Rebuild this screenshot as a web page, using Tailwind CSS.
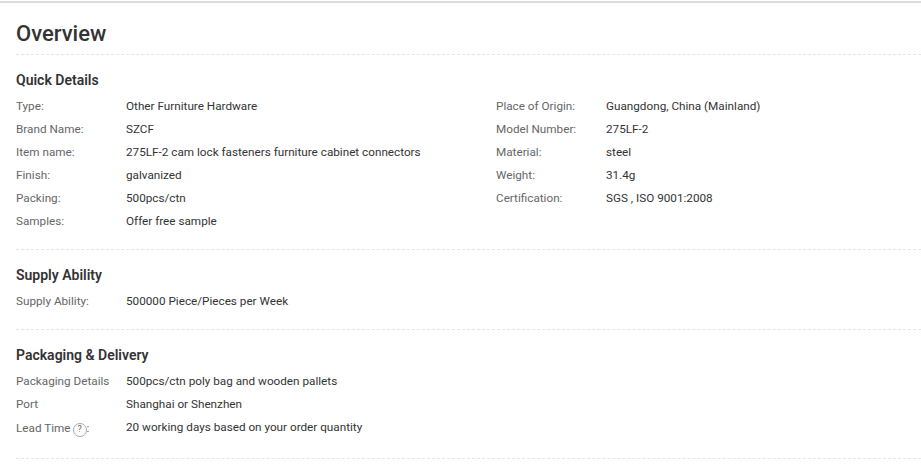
<!DOCTYPE html>
<html lang="en">
<head>
    <meta charset="UTF-8">
    <title>Overview</title>
    <script src="https://cdn.jsdelivr.net/npm/@tailwindcss/browser@4"></script>
</head>
<body class="bg-white font-['Roboto',sans-serif] text-[11.72px] leading-[23px] text-[#333] overflow-hidden">
    <div class="mt-px h-[2px] bg-[#ddd]"></div>

    <div class="pl-4">
        <!-- Title -->
        <div class="h-[52px] border-b border-dashed border-[#e5e5e5]">
            <h1 class="pt-[16px] text-[22px] leading-[30px] font-medium text-[#333]">Overview</h1>
        </div>

        <!-- Quick Details -->
        <div class="h-[195px] border-b border-dashed border-[#e5e5e5]">
            <h2 class="pt-[15px] pb-[5px] text-[14px] leading-[20px] font-semibold">Quick Details</h2>
            <div class="grid grid-cols-[110px_370px_110px_1fr]">
                <div class="text-[#666]">Type:</div><div>Other Furniture Hardware</div>
                <div class="text-[#666]">Place of Origin:</div><div>Guangdong, China (Mainland)</div>
                <div class="text-[#666]">Brand Name:</div><div>SZCF</div>
                <div class="text-[#666]">Model Number:</div><div>275LF-2</div>
                <div class="text-[#666]">Item name:</div><div>275LF-2 cam lock fasteners furniture cabinet connectors</div>
                <div class="text-[#666]">Material:</div><div>steel</div>
                <div class="text-[#666]">Finish:</div><div>galvanized</div>
                <div class="text-[#666]">Weight:</div><div>31.4g</div>
                <div class="text-[#666]">Packing:</div><div>500pcs/ctn</div>
                <div class="text-[#666]">Certification:</div><div>SGS , ISO 9001:2008</div>
                <div class="text-[#666]">Samples:</div><div>Offer free sample</div>
            </div>
        </div>

        <!-- Supply Ability -->
        <div class="h-[80px] border-b border-dashed border-[#e5e5e5]">
            <h2 class="pt-[15px] pb-[5px] text-[14px] leading-[20px] font-semibold">Supply Ability</h2>
            <div class="grid grid-cols-[110px_1fr]">
                <div class="text-[#666]">Supply Ability:</div><div>500000 Piece/Pieces per Week</div>
            </div>
        </div>

        <!-- Packaging & Delivery -->
        <div class="h-[129px] border-b border-dashed border-[#e5e5e5]">
            <h2 class="pt-[15px] pb-[5px] text-[14px] leading-[20px] font-semibold">Packaging &amp; Delivery</h2>
            <div class="grid grid-cols-[110px_1fr]">
                <div class="text-[#666]">Packaging Details</div><div>500pcs/ctn poly bag and wooden pallets</div>
                <div class="text-[#666]">Port</div><div>Shanghai or Shenzhen</div>
                <div class="flex h-[23px] items-center pt-[2px] text-[#666]">Lead Time
                    <span class="ml-[2px] mt-[2px] flex size-[14px] items-center justify-center rounded-full border border-[#aaa] text-[9px] leading-none">?</span>:
                </div><div>20 working days based on your order quantity</div>
            </div>
        </div>
    </div>
</body>
</html>
